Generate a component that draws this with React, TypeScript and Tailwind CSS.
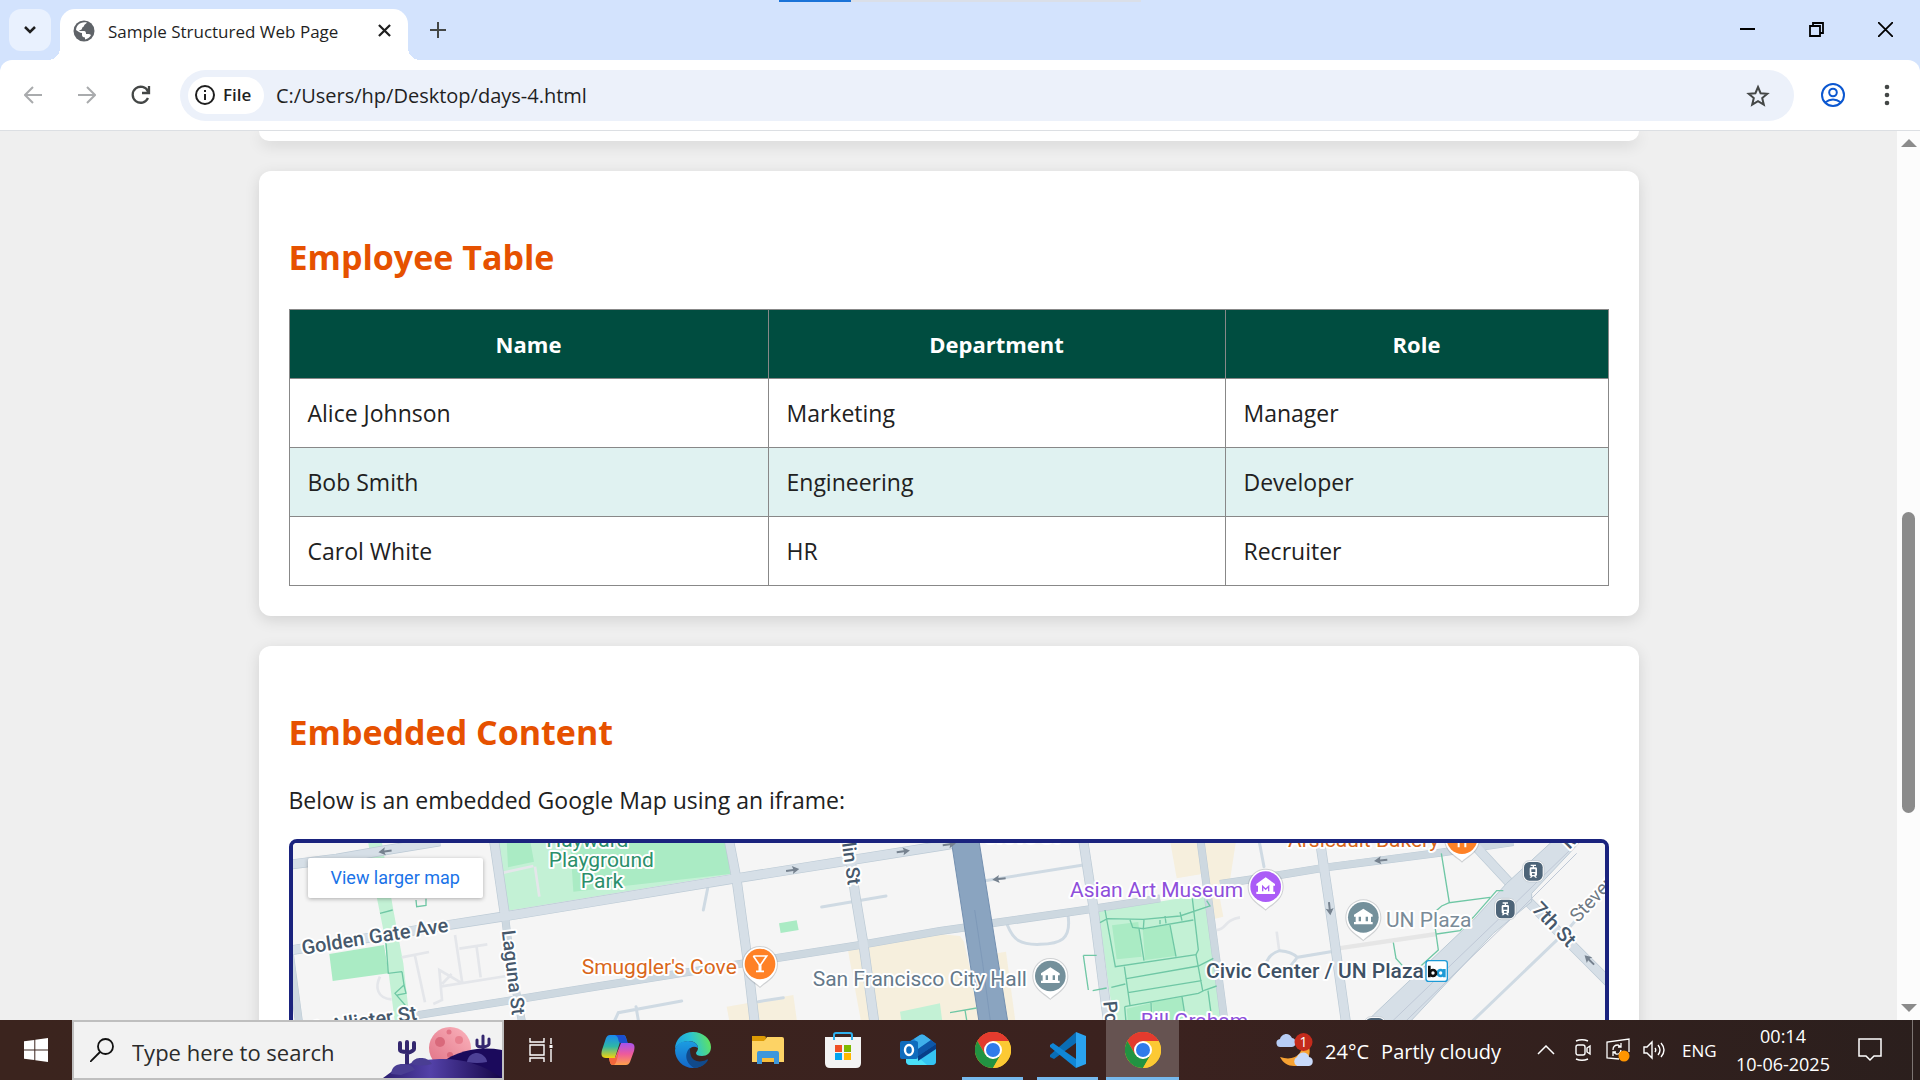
import React from "react";

const columns = ["Name", "Department", "Role"];
const employees = [
  ["Alice Johnson", "Marketing", "Manager"],
  ["Bob Smith", "Engineering", "Developer"],
  ["Carol White", "HR", "Recruiter"],
];

type IconProps = { className?: string };

function ChromeIcon() {
  return (
    <svg viewBox="0 0 36 36" className="size-9" aria-hidden="true">
      <circle cx="18" cy="18" r="18" fill="#fbc116" />
      <path d="M18 18 2.4 9A18 18 0 0 1 33.6 9Z" fill="#e33b2e" />
      <path d="M18 9H33.6A18 18 0 0 0 2.4 9L10.2 22.5Z" fill="#e33b2e" />
      <path d="M2.4 9A18 18 0 0 0 18 36L25.8 22.5 18 27 10.2 22.5Z" fill="#229342" />
      <path d="M33.6 9H18L25.8 22.5 18 36A18 18 0 0 0 33.6 9Z" fill="#fcc934" />
      <circle cx="18" cy="18" r="9" fill="#fff" />
      <circle cx="18" cy="18" r="7" fill="#2f7bea" />
    </svg>
  );
}

function EdgeIcon() {
  return (
    <svg viewBox="0 0 36 36" className="size-9" aria-hidden="true">
      <defs>
        <linearGradient id="edgeTop" x1="0" y1="0.6" x2="1" y2="0.4">
          <stop offset="0" stopColor="#1b9de2" />
          <stop offset="0.5" stopColor="#2bc3d2" />
          <stop offset="1" stopColor="#62e35c" />
        </linearGradient>
        <linearGradient id="edgeBody" x1="0" y1="0" x2="0" y2="1">
          <stop offset="0" stopColor="#1b9de2" />
          <stop offset="1" stopColor="#1467c8" />
        </linearGradient>
      </defs>
      <path d="M0 17C0 7 8 0 18 0s18 7 18 15c0 6-4 9-9 9-4 0-6-1-6-3 0-1 2-2 2-5 0-4-4-7-9-7C7 9 2 13 0 17Z" fill="url(#edgeTop)" />
      <path d="M0 18C1 12 7 9 13 9c6 0 10 3 10 7-7-4-12 3-9 9 3 7 11 8 18 4-3 4-8 7-14 7C8 36 0 28 0 18Z" fill="url(#edgeBody)" />
      <path d="M15 16c-5 4-6 14 4 20 7 0 12-4 14-8 0-1-1-1-2 0-7 3-13 1-15-4-1-3-1-6-1-8Z" fill="#114a8b" />
    </svg>
  );
}

function CopilotIcon() {
  return (
    <svg viewBox="0 0 34 32" className="h-8 w-[34px]" aria-hidden="true">
      <defs>
        <linearGradient id="copA" x1="0" y1="0" x2="0" y2="1">
          <stop offset="0" stopColor="#1a8af0" />
          <stop offset="0.5" stopColor="#2fb7a6" />
          <stop offset="1" stopColor="#f4d30b" />
        </linearGradient>
        <linearGradient id="copB" x1="0" y1="0" x2="0" y2="1">
          <stop offset="0" stopColor="#a553ee" />
          <stop offset="0.5" stopColor="#ee5a9b" />
          <stop offset="1" stopColor="#ffa14a" />
        </linearGradient>
      </defs>
      <path d="M9 1h13c3 0 3 3 4 6l-7 1-5 16H5c-5 0-5-4-4-8L5 4c1-2 2-3 4-3Z" fill="url(#copA)" />
      <path d="M14 1h8c3 0 3 4 5 8h-7c-4 0-1-6-6-8Z" fill="#1b4fd0" />
      <path d="M25 31H12c-3 0-3-3-4-7h6l6-15h9c5 0 5 4 4 8l-4 11c-1 2-2 3-4 3Z" fill="url(#copB)" />
      <path d="M8 24h7l4-11-3 12c-1 4-2 6-4 6-3 0-3-3-4-7Z" fill="#f2663b" />
    </svg>
  );
}

function FolderIcon() {
  return (
    <svg viewBox="0 0 32 28" className="h-7 w-8" aria-hidden="true">
      <path d="M0 1h12l3 3H0Z" fill="#e29d04" />
      <path d="M0 4h13l2-3h15q2 0 2 2v23H0Z" fill="#fdd365" />
      <path d="M0 0h12q2 0 2 2l-2 3H0Z" fill="#dc9a05" />
      <path d="M5 28V17q0-2 2-2h18q2 0 2 2v11h-5v-6H10v6Z" fill="#3c97dc" />
      <path d="M10 22h12v4H10Z" fill="#f8be3c" />
    </svg>
  );
}

function StoreIcon() {
  return (
    <svg viewBox="0 0 36 36" className="size-9" aria-hidden="true">
      <path d="M9 8V3q0-2 2-2h14q2 0 2 2v5" fill="none" stroke="#2fb1ee" strokeWidth="2" />
      <path d="M0 5h36v26q0 5-5 5H5q-5 0-5-5Z" fill="#f3f3f3" />
      <path d="M9 8V5M27 8V5" stroke="#2fb1ee" strokeWidth="2" />
      <path d="M10 13h7v7h-7Z" fill="#ef5026" />
      <path d="M19 13h7v7h-7Z" fill="#7eb900" />
      <path d="M10 21h7v7h-7Z" fill="#02a4ef" />
      <path d="M19 21h7v7h-7Z" fill="#feb800" />
    </svg>
  );
}

function OutlookIcon() {
  return (
    <svg viewBox="0 0 36 32" className="h-8 w-9" aria-hidden="true">
      <path d="M7 9 20 1q2-1 4 0l12 9v17q0 4-4 4H10q-4 0-4-4Z" fill="#1b84d8" />
      <path d="M20 1q2-1 4 0l7 5-13 9V9L14 5Z" fill="#3fb0ea" />
      <path d="M31 6l5 4-18 12v-7Z" fill="#0d57a8" />
      <path d="M36 12v15q0 4-4 4H20l-2-6Z" fill="#35c4f2" />
      <path d="M6 22v6q1 3 4 3h17L18 23Z" fill="#4ae0f8" />
      <path d="M36 15v-5L18 22v5Z" fill="#073f88" />
      <rect y="7" width="18" height="18" rx="2" fill="#0f6cbd" />
      <ellipse cx="9" cy="16" rx="4" ry="5" fill="none" stroke="#fff" strokeWidth="2.4" />
    </svg>
  );
}

function CodeIcon() {
  return (
    <svg viewBox="0 0 36 36" className="size-9" aria-hidden="true">
      <path d="M0 23 26 0v11L4 27 0 25Z" fill="#0a6db5" />
      <path d="M0 13l3-2 23 16v9L0 15Z" fill="#1086d6" />
      <path d="M26 0l10 4v28l-10 4Z" fill="#2aa3f0" />
    </svg>
  );
}

function TaskViewIcon() {
  return (
    <svg viewBox="0 0 24 24" className="size-6" fill="none" stroke="#fff" strokeWidth="1.4" aria-hidden="true">
      <path d="M1 0v4h14V0M1 24v-4h14v4M1 7h14v10H1ZM22 0v6M22 11v13" />
      <path d="M20.500 7h3v3h-3Z" fill="#fff" stroke="none" />
    </svg>
  );
}

function GlobeIcon({ className }: IconProps) {
  return (
    <svg viewBox="0 0 22 22" className={className} aria-hidden="true">
      <circle cx="11" cy="11" r="10.500" fill="#5f6368" />
      <path d="M8 3c2-1 4-1 6-.5-1 2-3 1.500-3 3.500 0 1-2 1-2 2.500S6 10 6 11h5c2 0 2 2 2 3h3c1 0 1.500 1 2 1-1 2-3 4-6 4.500v-2c-2 0-3-1-3-2.500v-2c-2 0-4-2-6-3C3 7 5 4 8 3Z" fill="#fff" />
    </svg>
  );
}

function SearchArt() {
  return (
    <svg viewBox="0 0 119 52" className="h-[52px] w-[119px] shrink-0 self-end" aria-hidden="true">
      <defs>
        <linearGradient id="hill" x1="0" y1="0" x2="1" y2="0">
          <stop offset="0" stopColor="#2c1f70" />
          <stop offset="0.4" stopColor="#5341a8" />
          <stop offset="1" stopColor="#150648" />
        </linearGradient>
        <linearGradient id="moon" x1="0" y1="1" x2="1" y2="0">
          <stop offset="0" stopColor="#e07084" />
          <stop offset="1" stopColor="#fbb4bd" />
        </linearGradient>
      </defs>
      <circle cx="67" cy="22" r="21" fill="url(#moon)" />
      <circle cx="57" cy="16" r="5" fill="#d9697b" />
      <circle cx="76" cy="14" r="4" fill="#e8808f" />
      <circle cx="66" cy="6" r="2.500" fill="#e27587" />
      <circle cx="67" cy="29" r="3" fill="#d9697b" />
      <path d="M24 40V16M17 17v7q0 2 7 2M31 17v6q0 2-7 4" fill="none" stroke="#34276f" strokeWidth="4" strokeLinecap="round" />
      <path d="M100 28V10M94 14v5q0 2 6 2M106 13v5q0 2-6 3" fill="none" stroke="#34276f" strokeWidth="3" strokeLinecap="round" />
      <path d="M50 44C70 24 95 20 119 24v28H50Z" fill="#1b0a5c" />
      <path d="M0 52C20 36 40 33 60 33c22 0 40 6 59 19Z" fill="url(#hill)" />
      <path d="M84 36c1-7 6-9 10-9s10 4 10 9q-10 2-20 0Z" fill="#4d4196" />
      <path d="M8 48c1-8 6-10 12-10s10 2 12 6l-14 5ZM28 38c2-5 6-6 10-6s8 1 11 6q-11 3-21 0Z" fill="#4a3e93" />
    </svg>
  );
}

function WeatherIcon() {
  return (
    <svg viewBox="0 0 37 34" className="h-[34px] w-[37px]" aria-hidden="true">
      <path d="M26 6c3 14-7 23-22 18 3 6 8 9 14 9 11 0 18-10 15-19-1-4-4-7-7-8Z" fill="#f7a233" />
      <path d="M5 14a4 4 0 0 1-1-8c1-5 9-8 12-1 5 0 5 9 0 9Z" fill="#b7cdf5" />
      <path d="M21 33a5 5 0 0 1 0-9c2-6 11-6 12 0 5 0 5 9 0 9Z" fill="#c9dafa" />
      <ellipse cx="27.500" cy="9" rx="9" ry="9" fill="#c42b1c" />
      <text x="27.500" y="14" textAnchor="middle" fontSize="14" fill="#fff" fontFamily="Open Sans, sans-serif">1</text>
    </svg>
  );
}

type Point = { x: number; y: number };

function Pin({ x, y, color, children }: Point & { color: string; children: React.ReactNode }) {
  return (
    <g transform={`translate(${x} ${y})`}>
      <path d="M0 72C-14 58-54 42-54 0a54 54 0 0 1 108 0C54 42 14 58 0 72Z" fill="#8a8f94" opacity="0.35" />
      <path d="M0 68C-14 52-51 40-51 0a51 51 0 0 1 102 0C51 40 14 52 0 68Z" fill="#fff" />
      <circle r="46" fill={color} />
      {children}
    </g>
  );
}

function Civic() {
  return <path d="M-28-8 0-26 28-8v6h-5v16h5v7h-56v-7h5V-2h-5ZM-14-2v14h7V-2ZM7-2v14h7V-2Z" fill="#fff" fillRule="evenodd" />;
}

function Tram({ x, y }: Point) {
  return (
    <g transform={`translate(${x} ${y})`}>
      <rect x="-32" y="-32" width="64" height="64" rx="20" fill="#fff" stroke="#b9c2ca" strokeWidth="2" />
      <rect x="-28" y="-28" width="56" height="56" rx="16" fill="#4d6478" />
      <path d="M-8-20H8v4H2v4h5q4 0 4 4v18q0 4-4 4l4 5H6l-4-4h-4l-4 4h-5l4-5q-4 0-4-4V-8q0-4 4-4h5v-4h-6ZM-6-6v8H6v-8ZM-4 6v5h8V6Z" fill="#fff" fillRule="evenodd" />
    </g>
  );
}

function Arrow({ x, y, angle }: Point & { angle: number }) {
  return (
    <path
      transform={`translate(${x} ${y}) rotate(${angle})`}
      d="M-20-3H2L-1-12 20 0-1 12 2 3h-22Z"
      fill="#76828f"
    />
  );
}

const wideRoads = [
  "M20 105 170 86 320 60 480 34",
  "M20 363 500 286 680 258 960 212 1350 148 1980 48 2030 40",
  "M642 30 674 250",
  "M1345 20 1370 150 1400 370 1438 700",
  "M1703 20 1725 190 1750 340 1800 700",
  "M2408 20 2440 230 2500 700",
  "M3118 20 3145 200 3215 700",
  "M3560 20 3690 160 3750 220 4000 470",
];
const midRoads = [
  "M20 300 60 600",
  "M674 250 692 400 750 700",
  "M370 562 700 510 960 468 1390 400 1740 345 1980 303 2060 292",
  "M2120 282 2430 238 2640 205",
  "M2760 20 2800 320 2850 700",
  "M2820 162 3000 135 3140 112 3480 68 3700 36",
];
const lanes = [
  "M1283 175 1270 240",
  "M1625 231 1818 198",
  "M1000 580 1015 548 1205 513M1068 530 1080 600",
  "M1435 515 1510 503",
  "M2110 153 2410 105",
  "M2182 285C2200 330 2220 345 2280 343S2375 330 2364 255",
  "M2935 20 2952 110",
  "M2960 395Q2970 370 3000 362 3035 365 3052 382L3170 362M3052 382 3030 410",
  "M3560 590 3860 302 3975 170",
];
const footways = [
  "M365 382 447 366M405 378 435 517",
  "M525 315 547 460M538 356 622 343M590 352 602 442M480 470 680 438M547 460 478 420 486 510 460 522M486 462 515 432",
  "M300 440C285 470 290 505 335 508",
];
const greenLines = [
  "M300 250 338 240M315 300 325 430 366 425M366 425 372 465 345 490 388 540M372 465 378 490 352 495M408 210 410 230 438 226V206",
  "M2460 278 2482 266 2590 268 2700 258 2790 228 2780 212M2475 240 2506 410 2748 374 2755 360 2737 205M2640 270 2640 283M2550 270 2558 292 2590 296 2592 268M2590 296 2740 270M2577 296 2592 392M2670 285 2688 380M2655 258 2658 280M2700 246 2706 272",
  "M2540 446 2755 408 2800 385M2544 488 2765 452M2494 472 2536 462M2534 530 2755 490 2775 480 2810 468M2533 410 2550 526M2748 374 2768 482M2613 518 2616 600M2706 500 2722 600M2784 482 2800 600M2534 530 2540 600",
  "M2410 376 2450 376M2410 376 2425 480M2438 482 2480 474",
  "M2010 548 2090 534M2055 540 2065 600",
  "M3484 70 3508 218 3630 202M3465 245 3485 228 3508 218M3465 290 3475 360 3420 410M3470 312 3540 302 3580 262 3650 182 3670 182M3340 338 3348 385 3370 410",
];

function MapDrawing() {
  return (
    <svg
      viewBox="39 39 3936 1350"
      preserveAspectRatio="xMidYMin slice"
      className="block h-[450px] w-full"
      role="img"
      aria-label="Street map of San Francisco around Civic Center"
      fontFamily="Roboto, sans-serif"
    >
      <rect x="0" y="0" width="4020" height="1400" fill="#f5f5f5" />
      <g fill="#f6efdd">
        <path d="M1703 356 1880 330 1980 312 2040 318 2052 335 2120 640H1755Z" />
        <path d="M1340 530 1540 495 1560 640H1360Z" />
        <path d="M2150 370 2178 365 2215 640H2180Z" />
        <path d="M2668 20H2870L2850 150 2812 165 2830 260 2805 266 2780 130 2690 145Z" />
      </g>
      <g fill="#c3f1d5">
        <path d="M645 20H1340L1355 132 680 243Z" />
        <path d="M262 20H303L340 240 370 400 390 580H345L326 430 310 300 290 200Z" />
        <path d="M2455 245 2700 205 2780 198 2812 390 2850 640H2510Z" />
        <path d="M1860 545 1980 520 1995 640H1875Z" />
      </g>
      <g fill="#aaebc4">
        <path d="M680 30H750L762 95 684 112ZM870 30H1340L1350 132 880 185Z" />
        <path d="M148 372 312 345 326 430 158 453Z" />
        <path d="M1497 280 1550 271 1556 300 1502 309Z" />
        <path d="M2496 286 2575 276 2585 380 2510 388ZM2588 296 2670 285 2686 378 2595 390ZM2540 536 2610 520 2618 640H2550ZM2616 516 2706 502 2730 640H2625Z" />
      </g>
      <g fill="none" stroke="#e4e6ea" strokeWidth="8">
        {footways.map((d) => <path key={d} d={d} />)}
        <path d="M2810 300C2840 300 2830 270 2880 262M2990 305 2998 365M662 130 760 108M765 110 778 200" />
        <path d="M3175 355 3470 312" stroke="#e6e6e6" strokeWidth="13" />
      </g>
      <g fill="none" stroke="#cfdae3" strokeWidth="9" strokeLinecap="round">
        {lanes.map((d) => <path key={d} d={d} />)}
      </g>
      <g fill="none" stroke="#bccad5" strokeWidth="24">
        {midRoads.map((d) => <path key={d} d={d} />)}
      </g>
      <g fill="none" stroke="#bccad5" strokeWidth="30">
        {wideRoads.map((d) => <path key={d} d={d} />)}
      </g>
      <g fill="none" stroke="#cdd8e0" strokeWidth="21">
        {midRoads.map((d) => <path key={d} d={d} />)}
      </g>
      <g fill="none" stroke="#d6dfe7" strokeWidth="26">
        {wideRoads.map((d) => <path key={d} d={d} />)}
      </g>
      <path d="M2012 20H2095L2200 680H2113Z" fill="#8aa4c0" stroke="#7490b0" strokeWidth="3" />
      <path d="M2084 240 2108 400 2140 640" fill="none" stroke="#7e99b8" strokeWidth="3" />
      <g stroke="#bccad5" strokeWidth="3" fill="#d6dfe7">
        <path d="M3190 650 3280 555 3580 270 3680 160 3832 20H3915L3755 190V215L3640 310 3320 650Z" />
        <path d="M3320 590 3700 225 3870 60M3350 600 3720 240 3890 70" fill="none" stroke="#bfc8d6" />
      </g>
      <g fill="none" stroke="#6fc7a5" strokeWidth="4">
        {greenLines.map((d) => <path key={d} d={d} />)}
      </g>
      <g>
        <Arrow x={315} y={64} angle={172} />
        <Arrow x={1538} y={120} angle={-8} />
        <Arrow x={1870} y={64} angle={-8} />
        <Arrow x={2008} y={43} angle={-8} />
        <Arrow x={2157} y={147} angle={174} />
        <Arrow x={3302} y={91} angle={174} />
        <Arrow x={3149} y={236} angle={84} />
        <Arrow x={3928} y={390} angle={224} />
      </g>
      <g stroke="#fff" strokeWidth="12" strokeLinejoin="round" style={{ paintOrder: "stroke" }} fontSize="63">
        <g fill="#2b8f6b" textAnchor="middle">
          <text x="922" y="50">Hayward</text>
          <text x="964" y="111">Playground</text>
          <text x="966" y="174">Park</text>
        </g>
        <g fill="#46586b" fontWeight="500" fontSize="60">
          <text transform="translate(68 374) rotate(-9)">Golden Gate Ave</text>
          <text transform="translate(72 622) rotate(-9)">McAllister St</text>
          <text transform="translate(665 303) rotate(83)" fontSize="57">Laguna St</text>
          <text transform="translate(1666 -101) rotate(82)" fontSize="57">Franklin St</text>
          <text transform="translate(2470 515) rotate(84)" fontSize="57">Polk St</text>
          <text transform="translate(3753 240) rotate(46)">7th St</text>
          <text transform="translate(3868 60) rotate(-45)">Market St</text>
          <text x="2110" y="40">Grove St</text>
          <text x="2778" y="445" fill="#3e5165" fontSize="63">Civic Center / UN Plaza</text>
        </g>
        <text transform="translate(3894 280) rotate(-47)" fill="#6f7a84" fontSize="57">Stevenson St</text>
        <text x="905" y="431" fill="#d9671b">Smuggler&#39;s Cove</text>
        <text x="3024" y="52" fill="#d9671b">Arsicault Bakery</text>
        <text x="1598" y="467" fill="#65798a">San Francisco City Hall</text>
        <text x="3318" y="292" fill="#7a8b98">UN Plaza</text>
        <text x="2370" y="200" fill="#8e4fdb">Asian Art Museum</text>
        <text x="2582" y="594" fill="#8e4fdb">Bill Graham</text>
      </g>
      <Pin x={1440} y={402} color="#ff8126">
        <path d="M-20-24H20L2 2V22H12M-12 22H2M-20-24-2 2V22" fill="none" stroke="#fff" strokeWidth="5" />
      </Pin>
      <Pin x={3546} y={26} color="#ff8126">
        <path d="M-10 0V26M10 0V26" stroke="#fff" strokeWidth="6" />
      </Pin>
      <Pin x={2311} y={438} color="#74909b"><Civic /></Pin>
      <Pin x={3250} y={262} color="#74909b"><Civic /></Pin>
      <Pin x={2957} y={170} color="#ab5cf7">
        <path d="M-28-8 0-28 28-8v5h-5v18h5v7h-56v-7h5V-3h-5Z" fill="#fff" />
        <path d="M-9 14V-1L0 8 9-1V14" fill="none" stroke="#ab5cf7" strokeWidth="4" />
      </Pin>
      <Tram x={3760} y={124} />
      <Tram x={3676} y={237} />
      <Tram x={3285} y={592} />
      <rect x="3438" y="392" width="64" height="62" rx="8" fill="#fff" stroke="#1d9ad6" strokeWidth="4" />
      <g fill="none" strokeWidth="8">
        <circle cx="3482" cy="429" r="9" stroke="#1d9ad6" />
        <path d="M3493 417V442" stroke="#1d9ad6" />
        <circle cx="3459" cy="429" r="9" stroke="#111" />
        <path d="M3448 407V442" stroke="#111" />
      </g>
    </svg>
  );
}

function TabStrip() {
  return (
    <div className="relative flex h-[60px] shrink-0 items-end bg-[#d3e3fd] pl-[9px]">
      <div className="absolute left-[779px] top-0 flex h-[2px] w-[362px] bg-[#dadfe8]">
        <div className="w-[72px] bg-[#1a73d8]" />
      </div>
      <button aria-label="Search tabs" className="mb-[9px] mr-[9px] flex size-[42px] items-center justify-center rounded-xl bg-[#e9f1fe]">
        <svg viewBox="0 0 14 10" className="h-[10px] w-[14px]" fill="none" stroke="#1f1f1f" strokeWidth="2.500" aria-hidden="true"><path d="M2 2l5 5 5-5" /></svg>
      </button>
      <div className="relative flex h-[51px] w-[348px] items-center rounded-t-[15px] bg-white pl-[13px] pr-4">
        <span className="absolute -left-3 bottom-0 size-3 bg-[radial-gradient(circle_at_0_0,#d3e3fd_12px,#fff_12px)]" />
        <span className="absolute -right-3 bottom-0 size-3 bg-[radial-gradient(circle_at_100%_0,#d3e3fd_12px,#fff_12px)]" />
        <GlobeIcon className="mb-2 size-[22px]" />
        <span className="ml-[13px] mb-[6px] text-[17px] leading-6 whitespace-nowrap text-[#1f1f1f]">Sample Structured Web Page</span>
        <button aria-label="Close tab" className="mb-2 ml-auto flex size-4 items-center justify-center">
          <svg viewBox="0 0 14 14" className="size-[13px]" stroke="#1f1f1f" strokeWidth="2.400" aria-hidden="true"><path d="M1 1l12 12M13 1 1 13" /></svg>
        </button>
      </div>
      <button aria-label="New tab" className="mb-[22px] ml-[22px]">
        <svg viewBox="0 0 16 16" className="size-4" stroke="#444746" strokeWidth="2" aria-hidden="true"><path d="M8 0v16M0 8h16" /></svg>
      </button>
      <div className="ml-auto flex self-start text-black">
        <button aria-label="Minimize" className="flex h-[58px] w-[69px] items-center justify-center">
          <svg viewBox="0 0 15 15" className="size-[15px]" stroke="currentColor" strokeWidth="2" aria-hidden="true"><path d="M0 7h15" /></svg>
        </button>
        <button aria-label="Restore" className="flex h-[58px] w-[69px] items-center justify-center">
          <svg viewBox="0 0 15 15" className="size-[15px]" fill="none" stroke="currentColor" strokeWidth="1.800" aria-hidden="true"><path d="M1 4h10v10H1ZM4 4V1h10v10h-3" /></svg>
        </button>
        <button aria-label="Close" className="flex h-[58px] w-[69px] items-center justify-center">
          <svg viewBox="0 0 15 15" className="size-[15px]" stroke="currentColor" strokeWidth="1.800" aria-hidden="true"><path d="M0 0l15 15M15 0 0 15" /></svg>
        </button>
      </div>
    </div>
  );
}

function Toolbar() {
  return (
    <div className="shrink-0 bg-[#d3e3fd]">
      <div className="flex h-[71px] items-center rounded-t-xl border-b border-[#dcdfe3] bg-white pl-6 pr-[30px]">
        <button aria-label="Back" className="mr-9">
          <svg viewBox="0 0 18 18" className="size-[18px]" fill="none" stroke="#a9abad" strokeWidth="2" aria-hidden="true"><path d="M18 9H1M9 1 1 9l8 8" /></svg>
        </button>
        <button aria-label="Forward" className="mr-[35px]">
          <svg viewBox="0 0 18 18" className="size-[18px]" fill="none" stroke="#a9abad" strokeWidth="2" aria-hidden="true"><path d="M0 9h17M9 1l8 8-8 8" /></svg>
        </button>
        <button aria-label="Reload" className="mr-[29px]">
          <svg viewBox="0 0 20 20" className="size-5" fill="none" stroke="#444746" strokeWidth="2.300" aria-hidden="true"><path d="M17 13A8 8 0 1 1 17 6.500M18 1v7h-7" /></svg>
        </button>
        <div className="flex h-[51px] flex-1 items-center rounded-full bg-[#ecf1fa] pl-2 pr-6">
          <button className="flex h-[37px] w-[76px] items-center gap-[8px] rounded-full bg-white pl-[7px] text-[17px] font-semibold text-[#1f1f1f]">
            <svg viewBox="0 0 20 20" className="size-5" fill="none" stroke="#1f1f1f" strokeWidth="2" aria-hidden="true"><circle cx="10" cy="10" r="9" /><path d="M10 9v6M10 5v2" /></svg>
            File
          </button>
          <input
            aria-label="Address"
            defaultValue="C:/Users/hp/Desktop/days-4.html"
            className="ml-3 h-10 flex-1 bg-transparent text-[20px] text-[#1f1f1f] outline-none"
          />
          <button aria-label="Bookmark this tab">
            <svg viewBox="0 0 24 23" className="h-[23px] w-6" fill="none" stroke="#444746" strokeWidth="2" aria-hidden="true"><path d="m12 3 2.600 6.200 6.700.5-5.100 4.400 1.600 6.500L12 17.100l-5.800 3.500 1.600-6.500L2.700 9.700l6.700-.5Z" /></svg>
          </button>
        </div>
        <button aria-label="Profile" className="ml-[27px]">
          <svg viewBox="0 0 24 24" className="size-6" fill="none" stroke="#0b57d0" strokeWidth="2" aria-hidden="true"><circle cx="12" cy="12" r="11" /><circle cx="12" cy="9.500" r="3.800" /><path d="M4 19.500q8-6 16 0" /></svg>
        </button>
        <button aria-label="Menu" className="ml-[39px]">
          <svg viewBox="0 0 6 22" className="h-[22px] w-[6px]" fill="#444746" aria-hidden="true"><circle cx="3" cy="3" r="2.300" /><circle cx="3" cy="11" r="2.300" /><circle cx="3" cy="19" r="2.300" /></svg>
        </button>
      </div>
    </div>
  );
}

function Card({ title, children }: { title: string; children: React.ReactNode }) {
  return (
    <section className="mb-[30px] rounded-xl bg-white px-[30px] pb-[30px] pt-[57px] shadow-[0_4px_15px_rgba(0,0,0,0.12)]">
      <h2 className="mb-5 text-[34px] leading-[58px] font-bold text-[#e65100]">{title}</h2>
      {children}
    </section>
  );
}

function Page() {
  return (
    <main className="flex min-h-0 flex-1 bg-[#efefef]">
      <div className="min-w-0 flex-1 overflow-hidden text-[23px] text-[#212121]">
        <div className="mx-auto max-w-[1380px]">
          <div className="mb-[30px] h-[10px] rounded-b-xl bg-white shadow-[0_4px_15px_rgba(0,0,0,0.12)]" />
          <Card title="Employee Table">
            <table className="mt-[23px] w-full border-collapse leading-[38px]">
              <thead className="bg-[#004d40] text-[22px] text-white">
                <tr>
                  {columns.map((name) => (
                    <th key={name} scope="col" className="border border-[#888] px-[18px] py-[15px] font-bold first:w-[479px] last:w-[383px]">{name}</th>
                  ))}
                </tr>
              </thead>
              <tbody>
                {employees.map((row) => (
                  <tr key={row[0]} className="even:bg-[#e0f2f1]">
                    {row.map((cell) => (
                      <td key={cell} className="border border-[#888] px-[18px] py-[15px]">{cell}</td>
                    ))}
                  </tr>
                ))}
              </tbody>
            </table>
          </Card>
          <Card title="Embedded Content">
            <p className="mb-5 leading-[38px]">Below is an embedded Google Map using an iframe:</p>
            <div className="relative overflow-hidden rounded-lg border-4 border-[#1a237e]">
              <MapDrawing />
              <a href="#map" className="absolute left-[15px] top-[15px] rounded-xs bg-white px-[23px] text-[18px] leading-10 text-[#1a73e8] shadow-[0_1px_4px_rgba(0,0,0,0.3)] font-[Roboto,sans-serif]">
                View larger map
              </a>
            </div>
          </Card>
        </div>
      </div>
      <div className="flex w-[23px] shrink-0 flex-col items-center bg-[#fcfcfc] py-2" aria-hidden="true">
        <svg viewBox="0 0 16 8" className="h-2 w-4"><path d="M0 8 8 0l8 8Z" fill="#8b8b8b" /></svg>
        <div className="mt-[365px] h-[301px] w-[13px] rounded-full bg-[#8b8b8b]" />
        <svg viewBox="0 0 16 8" className="mt-auto h-2 w-4"><path d="M0 0h16L8 8Z" fill="#8b8b8b" /></svg>
      </div>
    </main>
  );
}

const pinned = [
  { label: "Copilot", Icon: CopilotIcon },
  { label: "Microsoft Edge", Icon: EdgeIcon },
  { label: "File Explorer", Icon: FolderIcon },
  { label: "Microsoft Store", Icon: StoreIcon },
  { label: "Outlook", Icon: OutlookIcon },
];

function Taskbar() {
  return (
    <footer className="flex h-[60px] shrink-0 items-stretch bg-linear-to-r from-[#3b241e] via-[#3b221f] via-60% to-[#2b1f1d] text-white">
      <button aria-label="Start" className="flex w-[72px] items-center justify-center">
        <svg viewBox="0 0 24 24" className="size-6" fill="#fff" aria-hidden="true"><path d="M0 3.300 10.300 2v9.400H0ZM11.300 1.800 24 0v11.400H11.300ZM0 12.400h10.300V22L0 20.700ZM11.300 12.400H24V24l-12.700-1.800Z" /></svg>
      </button>
      <label className="flex w-[432px] items-center border-2 border-[#bfbfbf] bg-[#f2f2f2] pl-4">
        <svg viewBox="0 0 24 24" className="size-6 shrink-0" fill="none" stroke="#111" strokeWidth="1.800" aria-hidden="true"><circle cx="15.500" cy="8.500" r="7.500" /><path d="M10 14 0 24" /></svg>
        <input aria-label="Search" placeholder="Type here to search" className="ml-[18px] min-w-0 flex-1 bg-transparent pt-1 text-[22px] placeholder:text-[#2b2b2b] outline-none" />
        <SearchArt />
      </label>
      <button aria-label="Task view" className="mr-[3px] flex w-[73px] items-center justify-center"><TaskViewIcon /></button>
      {pinned.map(({ label, Icon }) => (
        <button key={label} aria-label={label} className="flex w-[75px] items-center justify-center"><Icon /></button>
      ))}
      <button aria-label="Google Chrome" className="flex w-[75px] flex-col items-center">
        <span className="flex flex-1 items-center pt-[3px]"><ChromeIcon /></span>
        <span className="h-[3px] w-[61px] bg-[#76b9ed]" />
      </button>
      <button aria-label="Visual Studio Code" className="flex w-[75px] flex-col items-center">
        <span className="flex flex-1 items-center pt-[3px]"><CodeIcon /></span>
        <span className="h-[3px] w-[61px] bg-[#76b9ed]" />
      </button>
      <button aria-label="Google Chrome, active window" className="ml-px flex w-[73px] flex-col items-center bg-[#665351]">
        <span className="flex flex-1 items-center pt-[3px]"><ChromeIcon /></span>
        <span className="h-[3px] w-full bg-[#76b9ed]" />
      </button>
      <div className="ml-auto flex items-center">
        <button className="flex items-center text-[20px] whitespace-nowrap">
          <WeatherIcon />
          <span className="ml-3 pt-[3px]">24°C</span>
          <span className="ml-3 pt-[3px]">Partly cloudy</span>
        </button>
        <button aria-label="Show hidden icons" className="ml-9">
          <svg viewBox="0 0 18 10" className="h-[10px] w-[18px]" fill="none" stroke="#fff" strokeWidth="1.500" aria-hidden="true"><path d="m1 9 8-8 8 8" /></svg>
        </button>
        <button aria-label="Meet Now" className="ml-5">
          <svg viewBox="0 0 16 22" className="h-[22px] w-4" fill="none" stroke="#fff" strokeWidth="1.400" aria-hidden="true"><rect x="1" y="6" width="9" height="10" rx="2" /><path d="M12 9l3-2v8l-3-2ZM1 2q6-2.500 12 0M1 20q6 2.500 12 0" /></svg>
        </button>
        <button aria-label="Windows Update" className="ml-[15px]">
          <svg viewBox="0 0 24 24" className="size-6" fill="none" stroke="#fff" strokeWidth="1.300" aria-hidden="true"><path d="M13 21 1 20V4L23 1v13M7 12q0-5 5-5l3 2M15 5v4h-3M15 12q-1 5-5 4l-3-2M7 18v-4h3" /><circle cx="18" cy="18" r="5.500" fill="#ff9500" stroke="none" /></svg>
        </button>
        <button aria-label="Volume" className="ml-[13px]">
          <svg viewBox="0 0 23 20" className="h-5 w-[23px]" fill="none" stroke="#fff" strokeWidth="1.400" aria-hidden="true"><path d="M1 7h3l5-5v16l-5-5H1ZM12 8q1.500 2 0 4M15 5q4 5 0 10M18 3q6 7 0 14" /></svg>
        </button>
        <span className="ml-4 w-[36px] pt-px text-[17px]">ENG</span>
        <div className="ml-4 w-[98px] text-center text-[18px] leading-[28px] whitespace-nowrap">
          <div>00:14</div>
          <div>10-06-2025</div>
        </div>
        <button aria-label="Notifications" className="ml-[26px]">
          <svg viewBox="0 0 24 24" className="size-6" fill="none" stroke="#fff" strokeWidth="1.500" aria-hidden="true"><path d="M1 1h22v17h-7l-4 4-4-4H1Z" /></svg>
        </button>
        <span className="ml-[30px] mr-[7px] h-[60px] w-px bg-[#7d7573]" />
      </div>
    </footer>
  );
}

export default function App() {
  return (
    <div className="flex h-screen flex-col overflow-hidden font-['Open_Sans','Noto_Sans',sans-serif]">
      <TabStrip />
      <Toolbar />
      <Page />
      <Taskbar />
    </div>
  );
}
